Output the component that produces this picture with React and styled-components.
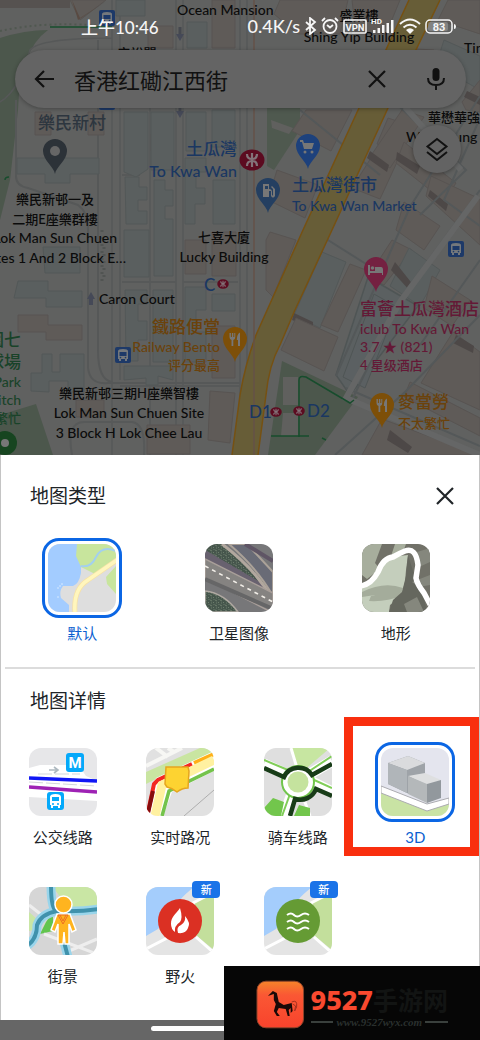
import React from "react";
import styled, { createGlobalStyle } from "styled-components";

const sans = 'Lato, "Noto Sans CJK SC", sans-serif';

const GlobalStyle = createGlobalStyle`
  * { box-sizing: border-box; }
  body { margin: 0; background: #fff; font-family: ${sans}; color: #202428; overflow-x: hidden; }
  button, input { font: inherit; color: inherit; }
`;

const Page = styled.main`
  position: relative;
  width: 100%;
`;

/* ---------- map ---------- */
const MapArea = styled.section`
  position: relative;
  overflow: hidden;
  background: #616160;
`;
const MapDrawing = styled.svg`
  display: block;
  width: 100%;
  height: auto;
`;
const Place = styled.div`
  position: absolute;
  left: ${(p) => p.$x}px;
  top: ${(p) => p.$y}px;
  transform: translateX(${(p) => (p.$align === "right" ? "-100%" : p.$align === "center" ? "-50%" : "0")});
  text-align: ${(p) => p.$align || "left"};
  white-space: nowrap;
  font-family: ${(p) => (p.$hk ? 'Lato, "Noto Sans CJK TC", sans-serif' : sans)};
  font-size: 13px;
  font-weight: 500;
  line-height: ${(p) => p.$line || 20}px;
  color: ${(p) => p.$color || "#0b0b0b"};
`;
const PlaceName = styled.div`
  font-size: 17px;
  line-height: 22px;
`;
const Latin = styled.div`
  font-size: ${(p) => p.$size || 14}px;
`;
const Chrome = styled.div`
  position: absolute;
  inset: 0 0 auto 0;
`;
const StatusBar = styled.div`
  display: flex;
  align-items: center;
  justify-content: space-between;
  height: 50px;
  padding: 2px 23px 0 81px;
  color: #f6f6f6;
  font-size: 17px;
  font-weight: 500;
`;
const StatusIcons = styled.div`
  display: flex;
  align-items: center;
  gap: 4px;
  font-size: 18px;
`;
const SearchBar = styled.form`
  display: flex;
  align-items: center;
  height: 58px;
  margin: 0 14px 0 15px;
  padding: 0 14px 0 13px;
  border-radius: 29px;
  background: #646464;
  box-shadow: 0 1px 4px rgba(0, 0, 0, 0.3);
`;
const SearchInput = styled.input`
  flex: 1;
  min-width: 0;
  margin-left: 14px;
  padding: 0;
  border: 0;
  outline: 0;
  background: transparent;
  font-size: 22px;
  color: #111;
`;
const IconButton = styled.button`
  display: grid;
  place-items: center;
  width: 32px;
  height: 32px;
  margin: 0 ${(p) => p.$after || 0}px 0 0;
  padding: 0;
  border: 0;
  background: none;
  color: ${(p) => p.$color || "#111"};
`;
const LayersButton = styled.button`
  display: grid;
  place-items: center;
  width: 48px;
  height: 48px;
  margin: 17px 19px 0 auto;
  padding: 0;
  border: 0;
  border-radius: 50%;
  background: #636363;
  box-shadow: 0 1px 4px rgba(0, 0, 0, 0.35);
  color: #121212;
`;

/* ---------- sheet ---------- */
const Sheet = styled.section`
  padding: 27px 4px 33px;
  background: #fff;
  border: solid #c4c4c4;
  border-width: 0 1px;
`;
const SheetHeader = styled.header`
  display: flex;
  align-items: center;
  justify-content: space-between;
  height: 28px;
  margin-bottom: ${(p) => p.$after}px;
  padding: 0 14px 0 25px;
`;
const Title = styled.h2`
  margin: 0;
  font-size: 19px;
  font-weight: 400;
  line-height: 28px;
`;
const Options = styled.div`
  display: grid;
  grid-template-columns: repeat(${(p) => p.$columns}, 1fr);
  row-gap: 33px;
  margin: 0 1px 0 -1px;
`;
const Divider = styled.hr`
  height: 2px;
  margin: 23px 0 18px;
  border: 0;
  background: #dcdcdc;
`;
const Option = styled.button`
  position: relative;
  display: flex;
  flex-direction: column;
  align-items: center;
  gap: 4px;
  padding: 0;
  border: 0;
  background: none;
  font-size: 15px;
  line-height: 22px;
  color: ${(p) => (p["aria-pressed"] ? "#0b5fd0" : "#202428")};
`;
const Frame = styled.span`
  position: relative;
  width: 80px;
  height: 80px;
  padding: 3px;
  border: 3px solid ${(p) => (p.$on ? "#0b66e4" : "transparent")};
  border-radius: 17px;
`;
const Tile = styled.svg`
  display: block;
  width: 68px;
  height: 68px;
  border-radius: 12px;
`;
const Badge = styled.span`
  position: absolute;
  top: -3px;
  right: -3px;
  width: 28px;
  border-radius: 4px;
  background: #1a73e8;
  color: #fff;
  font-size: 11px;
  font-weight: 500;
  line-height: 17px;
  text-align: center;
`;
const Highlight = styled.span`
  position: absolute;
  inset: -25px -5px -8px -13px;
  border: 9px solid #f92f0e;
`;
const NavBar = styled.footer`
  height: 20px;
  padding-top: 6px;
  background: #666;
`;
const Handle = styled.div`
  width: 37%;
  height: 5px;
  margin: 0 auto;
  border-radius: 3px;
  background: #fff;
`;

/* ---------- site mark ---------- */
const SiteMark = styled.aside`
  position: absolute;
  right: 0;
  bottom: 0;
  display: flex;
  gap: 6px;
  width: 256px;
  height: 74px;
  padding: 14px 32px 0 32px;
  background: #060606;
`;
const SiteText = styled.div`
  flex: 1;
  white-space: nowrap;
`;
const SiteName = styled.div`
  display: flex;
  align-items: center;
  height: 38px;
  font-size: 25px;
  font-weight: 700;
  color: #121413;
`;
const SiteNumber = styled.span`
  font-family: "Noto Sans", sans-serif;
  font-size: 27px;
  font-weight: 800;
  color: #f9492f;
`;
const SiteUrl = styled.div`
  display: flex;
  align-items: center;
  gap: 3px;
  height: 8px;
  font: italic 700 11px "Liberation Serif", serif;
  color: #2a302e;
  &::before, &::after { content: ""; flex: 1; height: 2px; background: #3a403d; }
`;

/* ---------- map symbols ---------- */
const Pin = ({ x, y, color, children }) => (
  <g transform={`translate(${x} ${y})`}>
    <path d="M0 35C-1 28-12 21-12 12a12 12 0 0 1 24 0C12 21 1 28 0 35Z" fill={color} />
    <g fill="#777" stroke="none">{children}</g>
  </g>
);
const Fork = () => (
  <path d="M-5.500 6v4q0 2.500 2 3v6h1.800v-6q2-.5 2-3V6h-1v4h-1V6h-1.400v4h-1V6ZM5 5.500Q1.800 7 1.800 13H3v6h2Z" />
);
const Bus = ({ x, y }) => (
  <g transform={`translate(${x} ${y})`}>
    <rect x="-8" y="-8" width="16" height="16" rx="2" fill="#1d3968" />
    <path d="M-5-4q0-2 5-2t5 2v8h-1v2h-2V4h-4v2h-2V4h-1Z" fill="#74787c" />
    <path d="M-3.500-3h7v4h-7Z" fill="#1d3968" />
    <circle cx="-2.500" cy="2.600" r=".8" fill="#1d3968" />
    <circle cx="2.500" cy="2.600" r=".8" fill="#1d3968" />
  </g>
);
const Metro = ({ x, y, s = 1 }) => (
  <g transform={`translate(${x} ${y}) scale(${s})`}>
    <ellipse rx="12.500" ry="10.500" fill="#5c0b20" />
    <path d="M0-7V7M-5-6Q-5-1 0-1T5-6M-5 6Q-5 1 0 1T5 6" fill="none" stroke="#837379" strokeWidth="2.200" />
  </g>
);
/* a building footprint with its shaded wall */
const Block = ({ p, wall, blue }) => (
  <g>
    <polygon points={p} fill={blue ? "#5a5f5f" : "#5f5b58"} stroke={blue ? "#535858" : "#585452"} strokeWidth="1" />
    {wall && <polygon points={wall} fill="#4d4847" />}
  </g>
);

const eastBlocks = [
  ["306,110 352,110 331,151 292,131"],
  ["277,170 318,185 305,218 268,200"],
  ["270,232 296,240 273,297 266,290 266,240"],
  ["322,252 346,262 320,328 294,315", "294,313 313,322 313,328 292,320"],
  ["350,264 366,270 338,332 321,325"],
  ["296,318 338,337 324,371 281,350"],
  ["388,118 412,126 398,153 377,144"],
  ["376,150 398,160 380,199 352,188"],
  ["398,48 434,50 421,78 392,66"],
  ["448,0 480,0 480,34 438,20"],
  ["444,40 480,56 480,90 436,65"],
  ["462,102 480,80 480,112 466,110", "467,91 480,97 480,105 464,97"],
  ["402,110 424,117 390,168 370,157", "370,151 389,165 387,172 367,158"],
  ["404,142 456,183 444,201 396,163", "397,152 420,166 417,174 396,160"],
  ["431,176 480,199 480,245 426,196", "430,190 448,204 446,211 428,196"],
  ["404,202 440,226 424,250 396,230"],
  ["392,240 412,250 384,285 368,277"],
  ["409,248 440,270 420,306 390,286", "395,262 414,286 410,291 391,270"],
  ["432,276 470,300 452,326 424,308"],
  ["453,332 480,352 480,410 421,383", "456,335 474,346 473,353 453,343"],
  ["410,382 480,418 480,436 404,397"],
  ["382,419 480,455 362,455", "390,430 412,447 408,453 387,440"],
  ["280,0 348,0 340,34 298,34 274,14"],
  ["352,0 400,0 386,34 356,34"],
];
const westBlocks = [
  ["17,158 99,158 99,174 70,174 70,183 45,183 45,174 17,174"],
  ["18,281 48,281 48,291 82,291 82,307 46,307 46,298 14,298"],
  ["43,247 80,247 80,273 45,273"],
  ["31,391 31,373 42,373 42,354 52,354 52,372 60,372 60,354 84,354 84,392 68,392 68,381 49,381 49,392"],
  ["124,112 148,112 148,169 136,177 124,172"],
  ["151,112 174,112 174,170 151,170"],
  ["125,177 139,177 139,187 147,187 147,200 138,200 138,211 147,211 147,224 126,224"],
  ["154,180 165,180 165,190 173,190 173,206 165,206 165,219 173,219 173,276 154,276"],
  ["186,112 206,112 206,151 186,151"],
  ["212,110 235,110 235,147 212,147"],
  ["185,158 206,158 206,172 196,172 196,188 205,188 205,204 195,204 195,224 185,224"],
  ["213,180 235,180 235,224 213,224"],
  ["124,230 149,230 149,277 124,277"],
  ["125,290 147,290 147,304 138,304 138,321 147,321 147,340 138,340 138,361 126,361"],
  ["153,290 173,290 173,362 153,362"],
  ["185,287 206,287 206,310 196,310 196,332 206,332 206,362 185,362"],
  ["212,294 235,294 235,311 212,311"],
  ["124,366 173,366 173,380 158,376 158,385 146,385 146,378 124,380"],
  ["187,22 207,22 207,48 187,48"],
  ["116,0 145,0 145,16 116,16"],
];
const warmBlocks = [
  ["35,112 51,112 51,135 35,135"], ["88,112 104,112 104,135 88,135"],
  ["18,315 48,315 48,325 82,325 82,340 46,340 46,332 18,332"],
  ["76,400 104,400 104,417 76,417"], ["148,26 173,26 173,48 148,48"],
  ["212,0 235,0 235,48 212,48"], ["70,0 106,0 80,20"],
  ["151,134 171,134 171,151 151,151"], ["185,240 206,240 206,274 185,274"],
  ["212,232 236,232 236,276 212,276"], ["212,326 235,326 235,378 212,378"],
  ["210,391 235,393 230,443 208,440"], ["147,425 190,425 190,454 147,454"],
];

const MapPicture = () => (
  <MapDrawing viewBox="0 0 480 455" aria-hidden="true">
    <rect width="480" height="455" fill="#606160" />
    <path d="M0 38Q25 30 48 30Q20 50 18 110L10 180L0 220Z" fill="#4c574c" />
    <path d="M0 415 36 404 53 455H0Z" fill="#4c574c" />
    <path d="M267 108H300L300 130L274 170L267 166Z" fill="#4f594f" />
    <path d="M282 361 358 397 315 455H268Z" fill="#4c574c" />
    <path d="M271 120 293 128 289 134 272 128Z" fill="#60605e" />
    <path d="M283 377H298V405H283ZM283 413H298V436H281Z" fill="#60605e" />
    <path d="M0 8H70V0H0Z" fill="#565250" />
    <path d="M112 0V455M120 0V380M176 0V108V455M183 0V455M150 108V455M240 0V455M247 0V455M0 102Q20 90 30 50Q40 38 112 38" fill="none" stroke="#565858" strokeWidth="1.500" />
    <path d="M16 100V176Q16 186 28 188L78 205Q88 212 88 230V368Q90 385 108 383H240M98 40V350Q98 380 112 382" fill="none" stroke="#565858" strokeWidth="2" />
    <path d="M72 455Q66 422 84 422H132Q146 424 144 455M122 282H176M183 282H238M122 175H140M120 386H240" fill="none" stroke="#575959" strokeWidth="2" />
    <path d="M102 230V282M104 240V280" stroke="#515452" strokeWidth="3" strokeDasharray="2 5" />
    <path d="M0 31Q50 20 112 27" fill="none" stroke="#505850" strokeWidth="2" strokeDasharray="2 3" />
    {warmBlocks.map(([p]) => <Block key={p} p={p} />)}
    {westBlocks.map(([p]) => <Block key={p} p={p} blue />)}
    {eastBlocks.map(([p, wall], i) => <Block key={p} p={p} wall={wall} blue={i % 7 === 3} />)}
    <path d="M368 277 418 306 350 395 336 375Z" fill="#5b6061" stroke="#4f5555" strokeWidth="1.500" />
    <path d="M374 294 397 307 365 388 343 377Z" fill="#5b6062" stroke="#4f5555" />
    <path d="M400 107 466 170 420 215M300 110 380 175M480 190 402 296 352 400M480 96 410 207 336 376M480 315 405 392 335 455M346 388 480 446M320 235 366 264M480 118 444 200 480 226M480 260 420 345" fill="none" stroke="#545859" strokeWidth="2" />
    <path d="M405 107 461 170M478 196 400 302 346 398 480 455" fill="none" stroke="#656666" strokeWidth="6" />
    <path d="M78 20 105 2 80 18 72 0Z" fill="#594a42" />
    <path d="M409 0 359 108 303 230 256 335Q245 365 240 395L232 455H258L266 395Q269 365 280 345L295 310 332 230 388 108 440 0Z" fill="#675d37" />
    <path d="M409 0 359 108 303 230 256 335Q245 365 240 395L232 455M258 455 266 395Q269 365 280 345L295 310 332 230 388 108 440 0" fill="none" stroke="#765112" strokeWidth="1.500" />
    <path d="M254 0V455" stroke="#655248" strokeWidth="1.500" />
    <path d="M50 27H112M5 180Q5 177 9 177M299 437V380Q299 375 306 377L350 403 354 400M271 436H309M322 438 326 440" fill="none" stroke="#174d2d" strokeWidth="1.500" />
    <path d="M180 27V36M180 108V112" stroke="#45484f" strokeWidth="3" />
    <path d="M176 34H184L180 41ZM176 111H184L180 118ZM91 292 95 299H93V305H89V299H87Z" fill="#454957" />
    <Bus x={107} y={18} /><Bus x={107} y={102} /><Bus x={123} y={355} /><Bus x={456} y={249} />
    <Metro x={252} y={160} /><Metro x={223} y={284} s={0.46} /><Metro x={276} y={412} s={0.46} /><Metro x={299} y={411} s={0.46} />
    <Pin x={55} y={139} color="#2c3238"><circle cy="12" r="5" fill="#666" /></Pin>
    <Pin x={308} y={134} color="#1d417c">
      <path d="M-8 6h3l1 3h10l-2 6h-8L-6 8h-2Z" /><circle cx="-3" cy="18" r="1.500" /><circle cx="4" cy="18" r="1.500" />
    </Pin>
    <Pin x={268} y={178} color="#243f61">
      <path d="M-5 6h6v5q3 0 3 3v3q1 1 1 0v-6l-2-2 1-1 3 3v7q-2 3-4 0v-5h-2v6h-6Z" /><path d="M-3 8h3v3h-3Z" fill="#243f61" />
    </Pin>
    <Pin x={235} y={327} color="#7d4f08"><Fork /></Pin>
    <Pin x={382} y={393} color="#7d4f08"><Fork /></Pin>
    <Pin x={376} y={257} color="#742141">
      <path d="M-8 8h2v6h5v-4h6q2 0 2 3v5H6v-2H-6v2h-2Z" /><circle cx="-3.500" cy="11" r="1.800" />
    </Pin>
    <circle cx="5" cy="443" r="12" fill="#174520" /><circle cx="5" cy="443" r="4" fill="#777" />
  </MapDrawing>
);

const blue = "#1a3762";
const green = "#194329";
const orange = "#6b420b";
const pink = "#641936";

const MapLabels = () => (
  <>
    <Place $x={177} $y={0}><Latin>Ocean Mansion</Latin></Place>
    <Place $x={359} $y={5} $line={21} $align="center" $hk>盛業樓<Latin>Shing Yip Building</Latin></Place>
    <Place $x={137} $y={43} $align="center" $hk>安裕閣</Place>
    <Place $x={464} $y={38}><Latin>Tin</Latin></Place>
    <Place $x={428} $y={107} $hk>華懋華強</Place>
    <Place $x={406} $y={127}><Latin>Wah Keung</Latin></Place>
    <Place $x={72} $y={112} $align="center" $color="#2d363f" $hk><PlaceName>樂民新村</PlaceName></Place>
    <Place $x={55} $y={189} $align="center" $hk>樂民新邨一及<br />二期E座樂群樓</Place>
    <Place $x={117} $y={228} $align="right"><Latin>Lok Man Sun Chuen</Latin></Place>
    <Place $x={126} $y={248} $align="right"><Latin>Sites 1 And 2 Block E…</Latin></Place>
    <Place $x={237} $y={138} $align="right" $color={blue} $line={22} $hk><PlaceName>土瓜灣</PlaceName><Latin $size={16}>To Kwa Wan</Latin></Place>
    <Place $x={292} $y={174} $color={blue} $hk><PlaceName>土瓜灣街市</PlaceName><Latin>To Kwa Wan Market</Latin></Place>
    <Place $x={224} $y={227} $align="center" $hk>七喜大廈<Latin>Lucky Building</Latin></Place>
    <Place $x={204} $y={274} $color={blue}><PlaceName>C</PlaceName></Place>
    <Place $x={99} $y={289}><Latin>Caron Court</Latin></Place>
    <Place $x={220} $y={316} $align="right" $color={orange} $line={18} $hk><PlaceName>鐵路便當</PlaceName><Latin>Railway Bento</Latin>评分最高</Place>
    <Place $x={21} $y={329} $align="right" $color={green} $line={18} $hk><PlaceName>園七</PlaceName><PlaceName>球場</PlaceName><Latin>Park</Latin><Latin>Pitch</Latin>繁忙</Place>
    <Place $x={129} $y={383} $align="center" $hk>樂民新邨三期H座樂智樓<Latin>Lok Man Sun Chuen Site</Latin><Latin>3 Block H Lok Chee Lau</Latin></Place>
    <Place $x={249} $y={401} $color={blue}><PlaceName>D1</PlaceName></Place>
    <Place $x={307} $y={400} $color={blue}><PlaceName>D2</PlaceName></Place>
    <Place $x={360} $y={298} $color={pink} $line={18} $hk><PlaceName>富薈土瓜灣酒店</PlaceName><Latin>iclub To Kwa Wan</Latin><Latin>3.7 ★ (821)</Latin>4 星级酒店</Place>
    <Place $x={398} $y={391} $color={orange} $hk><PlaceName>麥當勞</PlaceName>不太繁忙</Place>
  </>
);

const Cross = ({ size = 18 }) => (
  <svg width={size} height={size} viewBox="0 0 18 18"><path d="m1 1 16 16M17 1 1 17" stroke="currentColor" strokeWidth="2.200" /></svg>
);

const StatusSymbols = () => (
  <>
    <svg width="13" height="18" viewBox="0 0 13 18" fill="none" stroke="currentColor" strokeWidth="1.800"><path d="m2 5 9 8-5 4V1l5 4-9 8" /></svg>
    <svg width="18" height="18" viewBox="0 0 18 18" fill="none" stroke="currentColor" strokeWidth="1.800"><circle cx="9" cy="9.500" r="6.500" /><path d="m1 4 3-3M17 4l-3-3M6 8l3 2.500 3-2.500" /></svg>
    <svg width="24" height="15" viewBox="0 0 24 15"><rect x="1" y="1" width="22" height="13" rx="1" fill="none" stroke="currentColor" strokeWidth="1.600" /><text x="12" y="11.500" textAnchor="middle" fontSize="9.500" fontWeight="700" fontFamily="Roboto, sans-serif" fill="currentColor">VPN</text></svg>
    <svg width="24" height="18" viewBox="0 0 24 18" fill="currentColor"><text x="0" y="7" fontSize="8" fontWeight="700" fontFamily="Roboto, sans-serif">HD</text><path d="M2 13h2.500v3H2ZM6.500 11H9v5H6.500ZM11 8h2.500v8H11ZM15.500 6H18v10h-2.500ZM20 3h2.500v13H20Z" /></svg>
    <svg width="22" height="17" viewBox="0 0 22 17" fill="none" stroke="currentColor" strokeWidth="2"><path d="M1 6Q11-3 21 6M4.500 9.500Q11 4 17.500 9.500" /><path d="M7 12q4-3.500 8 0l-4 4Z" fill="currentColor" stroke="none" /></svg>
    <svg width="32" height="15" viewBox="0 0 32 15"><rect x="1" y="1" width="26" height="13" rx="4" fill="none" stroke="currentColor" strokeWidth="1.500" /><rect x="3" y="3" width="20" height="9" rx="2" fill="#999" opacity=".6" /><path d="M29 5q2 0 2 2.500T29 10Z" fill="currentColor" /><text x="14" y="11.500" textAnchor="middle" fontSize="11" fontWeight="700" fontFamily="Roboto, sans-serif" fill="currentColor">83</text></svg>
  </>
);

/* ---------- tile drawings ---------- */
const DefaultArt = () => (
  <>
    <rect width="68" height="68" fill="#dedede" />
    <path d="M0 0H29L29 12 33 20 33 29Q31 40 25 42L15 42Q11 47 13 54L21 61V68H0Z" fill="#a3ccff" />
    <path d="M29 0H68V14L47 30 33 23 28 12ZM68 22 58 33 59 40 68 50Z" fill="#c8e59d" />
    <path d="M33 22Q43 24 48 13Q54 1 68 7" fill="none" stroke="#a3d0ee" strokeWidth="2" />
    <path d="M69 16 40 36Q25 45 27 69" fill="none" stroke="#f7e2a5" strokeWidth="5" /><path d="M69 16 40 36Q25 45 27 69" fill="none" stroke="#fff6bd" strokeWidth="3.500" />
    <path d="M13 40h2M9 44h2M9 53h2M12 41v2" stroke="#d5e9ff" />
  </>
);
const SatelliteArt = () => (
  <>
    <defs><pattern id="trees" width="5" height="5" patternUnits="userSpaceOnUse"><rect width="5" height="5" fill="#46564c" /><path d="m0 1 2 1M3 3l1 1M1 4h1M4 0v1" stroke="#6c7c6c" /></pattern></defs>
    <rect width="68" height="68" fill="#777779" />
    <path d="M2 0H16L68 45V49L0 6Z" fill="url(#trees)" />
    <path d="M0 6 50 35 68 47V59L0 20Z" fill="#68616f" />
    <path d="M24 0H42L68 28V52Q53 25 24 0Z" fill="#696b76" stroke="#aaa198" strokeWidth="2" />
    <path d="M17 0Q50 25 66 53" fill="none" stroke="#b1a79e" strokeWidth="3" />
    <path d="M40 0 68 17" stroke="#5f5565" strokeWidth="4" />
    <path d="M0 15 68 49V69L0 34Z" fill="#858381" stroke="#a89e99" strokeWidth="1.500" />
    <path d="M0 22 68 58" stroke="#f1ede7" strokeWidth="1.600" strokeDasharray="4 4" />
    <path d="M0 35 68 65" stroke="#666667" strokeWidth="4" />
    <path d="M0 47Q19 49 33 68H0Z" fill="url(#trees)" stroke="#b0a9a2" strokeWidth="1.500" />
  </>
);
const TerrainArt = () => (
  <>
    <rect width="68" height="68" fill="#717168" />
    <path d="M0 6 7 0H20L13 19 18 25 5 35 0 31ZM33 0H44L41 8 29 12Z" fill="#a7ae9d" />
    <path d="M0 42 12 35 27 13 46 11 44 26 43 38 39 53 28 61 27 68H0Z" fill="#c4cebc" />
    <path d="M0 48Q22 37 41 44L39 52Q25 58 7 57L9 52Q26 49 0 53Z" fill="#a4ac9b" />
    <path d="M46 11 51 27 61 50 65 68H27L31 56 40 48 44 32Z" fill="#65675e" />
    <path d="M55 8 68 4V18L57 23ZM50 38 68 31V41L57 43ZM42 60 55 53 62 68H45Z" fill="#85877d" />
    <path d="M-2 42Q9 41 16 28Q21 14 31 13Q38 9 43 7Q54 3 56 21L54 34Q55 40 62 49L70 64" fill="none" stroke="#fff" strokeWidth="5.500" />
  </>
);
const TransitArt = () => (
  <>
    <rect width="68" height="68" fill="#e7e7e9" />
    <path d="M0 20 11 17H42Q51 18 57 28L68 33V53L0 49Z" fill="#fff" />
    <path d="M0 30 68 33" stroke="#1017f5" strokeWidth="3.500" /><path d="M0 39 68 44" stroke="#9e22b4" strokeWidth="3.500" />
    <path d="m0 34 68 4M9 26h42" stroke="#d3d7da" strokeDasharray="14 3" />
    <path d="M20 22h8M25 19l4 3-4 3" fill="none" stroke="#aeb9c0" strokeWidth="1.600" />
    <rect x="37" y="5" width="18" height="19" rx="3" fill="#05a9fa" />
    <text x="46" y="20" textAnchor="middle" fontSize="15" fontWeight="700" fontFamily="Roboto, sans-serif" fill="#fff">M</text>
    <rect x="18" y="44" width="17" height="18" rx="3" fill="#05a9fa" />
    <path d="M21 49q0-3 5.500-3t5.500 3v8h-1v3h-2v-2h-5v2h-2v-3h-1Z" fill="#fff" /><path d="M23 49h7v4h-7Z" fill="#05a9fa" /><circle cx="24" cy="56" r="1" fill="#05a9fa" /><circle cx="29" cy="56" r="1" fill="#05a9fa" />
  </>
);
const TrafficArt = () => (
  <>
    <rect width="68" height="68" fill="#e1e1e1" />
    <path d="M0 24 54 0H68V7L14 29 0 36Z" fill="#c9e5a1" />
    <path d="M0 18 36 0M10 0 22 9M22 0 28 4" fill="none" stroke="#f7f7f4" strokeWidth="4" />
    <path d="M0 62 10 30 68 3V23L26 44 17 68H0Z" fill="#fff" />
    <path d="M2 64 8 36 12 32 46 16" fill="none" stroke="#f32722" strokeWidth="4" /><path d="M2 65 7 43" stroke="#860d0d" strokeWidth="4" /><path d="m48 15 20-9" stroke="#ffb018" strokeWidth="4" />
    <path d="M9 68 16 37 68 12" fill="none" stroke="#fff1a1" strokeWidth="9" />
    <path d="M16 68 23 43 68 21" fill="none" stroke="#74c34b" strokeWidth="3.500" />
    <path d="M38 68 68 42" stroke="#adadad" />
    <path d="M20 19h22l1 4-1 17Q36 40 31 44Q26 40 21 39L19 36Z" fill="#fdd331" stroke="#e5a51f" strokeWidth="1.500" />
  </>
);
const BikeArt = () => (
  <>
    <rect width="68" height="68" fill="#dfdfdf" /><path d="M27 0H66L38 24 31 17Z" fill="#c7e6a1" />
    <path d="M0 16 22 26M68 13 46 26M48 34 68 44M28 46 20 68" stroke="#fff" strokeWidth="11" />
    <path d="M27 0 33 20M38 46 46 68" stroke="#fff" strokeWidth="3" />
    <path d="M0 60 9 50 20 54 17 68H0ZM35 57 46 60V68H30Z" fill="#72c64c" />
    <path d="M0 12 24 22M44 24 68 8M48 31 68 40M26 46 18 68" fill="none" stroke="#80cd58" strokeWidth="2" />
    <circle cx="34" cy="34" r="16" fill="#fff" stroke="#71c54c" strokeWidth="2" />
    <path d="M0 20 20 29A16 16 0 0 1 48 27L68 16M68 48 52 41A17 17 0 0 1 31 51L26 68" fill="none" stroke="#183c18" strokeWidth="4.500" />
    <circle cx="34" cy="34" r="10.500" fill="#c5e39e" />
  </>
);
const BuildingsArt = () => (
  <>
    <rect width="68" height="68" fill="#e4e5ee" /><path d="M0 45 46 60 68 54V68H0Z" fill="#c9e3a4" />
    <path d="M0 38 46 56 68 50V56L46 63 0 45Z" fill="#fff" stroke="#ababb0" />
    <path d="M7 15 27 8 44 15V30L28 46 7 36Z" fill="#9ea3a8" /><path d="M7 15 27 8 44 15 26 22Z" fill="#dadbdd" /><path d="M7 15 26 22V45L7 36Z" fill="#b0b5b9" />
    <path d="m27 28 17-3 16 7-14 5Z" fill="#dedfe0" /><path d="m27 28 19 8v19l-19-9Z" fill="#b4b8ba" /><path d="m46 36 14-4v18l-14 5Z" fill="#92989d" />
  </>
);
const StreetArt = () => (
  <>
    <rect width="68" height="68" fill="#d6d6d6" /><path d="M24 0H68V27L39 21ZM0 25 9 33 4 43 0 44Z" fill="#c9e6a4" /><path d="M17 35 24 25V44L11 47Z" fill="#62c54e" />
    <path d="M0 18 14 29M15 47 68 67M40 64 68 52" stroke="#eee" strokeWidth="3" />
    <path d="M22-2Q22 21 27 24Q52 25 70 22M28 24Q12 27 8 38Q8 52-2 59M35 55 39 70" fill="none" stroke="#99d5eb" strokeWidth="9" />
    <path d="M22-2Q22 21 27 24Q52 25 70 22M28 24Q12 27 8 38Q8 52-2 59M35 55 39 70" fill="none" stroke="#4092ac" strokeWidth="4" />
    <g fill="#ffb41f" stroke="#fff" strokeWidth="1.500"><path d="M28 27h13l6 16-4 2-3-8v20h-4l-1-12-1 12h-5V37l-3 8-4-2Z" /><circle cx="34.500" cy="17.500" r="8.500" /></g>
    <path d="m29 28 5 9 5-9M31 28l3 6 3-6M29 28h10" fill="none" stroke="#ed6d23" />
  </>
);
const AlertBase = ({ color, children }) => (
  <>
    <rect width="68" height="68" fill="#e4e4e4" /><path d="M0 0H48Q38 8 35 12L12 42 0 49Z" fill="#a4cdfc" /><path d="M49 14 68 9V63L46 45Z" fill="#c3df9c" />
    <path d="M0 62 25 49M50 50 68 66M45 17 68 5" fill="none" stroke="#fff" strokeWidth="3" />
    <circle cx="34" cy="34" r="22" fill={color} />{children}
  </>
);
const FireArt = () => (
  <AlertBase color="#db3023"><path d="M34 21C29 28 25 30 25 37Q25 42 29 45Q28 39 34 35Q37 31 34 21ZM39 29Q40 35 35 38Q30 40 32 46Q40 47 42 41Q45 36 39 29Z" fill="#fff" /></AlertBase>
);
const AirArt = () => (
  <AlertBase color="#659b34"><path d="M23 28q4-3 7 0t7 0 8 0M23 35q4-3 7 0t7 0 8 0M23 42q4-3 7 0t7 0 8 0" fill="none" stroke="#fff" strokeWidth="2" /></AlertBase>
);

const mapTypes = [
  { label: "默认", Art: DefaultArt, on: true },
  { label: "卫星图像", Art: SatelliteArt },
  { label: "地形", Art: TerrainArt },
];
const mapDetails = [
  { label: "公交线路", Art: TransitArt },
  { label: "实时路况", Art: TrafficArt },
  { label: "骑车线路", Art: BikeArt },
  { label: "3D", Art: BuildingsArt, on: true, marked: true },
  { label: "街景", Art: StreetArt },
  { label: "野火", Art: FireArt, fresh: true },
  { label: "", name: "空气质量", Art: AirArt, fresh: true },
];

const MapOption = ({ label, name, Art, on, fresh, marked }) => (
  <Option type="button" aria-pressed={!!on} aria-label={name}>
    {marked && <Highlight />}
    <Frame $on={on}>
      <Tile viewBox="0 0 68 68" aria-hidden="true"><Art /></Tile>
      {fresh && <Badge>新</Badge>}
    </Frame>
    {label}
  </Option>
);

export default function App() {
  return (
    <Page>
      <GlobalStyle />
      <MapArea>
        <MapPicture />
        <MapLabels />
        <Chrome>
          <StatusBar>
            <span>上午10:46</span>
            <StatusIcons>0.4K/s<StatusSymbols /></StatusIcons>
          </StatusBar>
          <SearchBar onSubmit={(e) => e.preventDefault()}>
            <IconButton type="button" aria-label="返回">
              <svg width="20" height="18" viewBox="0 0 20 18" fill="none" stroke="currentColor" strokeWidth="2.200"><path d="M20 9H2M10 1 2 9l8 8" /></svg>
            </IconButton>
            <SearchInput aria-label="搜索" defaultValue="香港红磡江西街" />
            <IconButton type="button" aria-label="清除" $after={27}><Cross /></IconButton>
            <IconButton type="button" aria-label="语音搜索">
              <svg width="18" height="24" viewBox="0 0 18 24"><rect x="5.500" y="1" width="7" height="13" rx="3.500" fill="currentColor" /><path d="M1 11q0 7 8 7t8-7M9 18v5" fill="none" stroke="currentColor" strokeWidth="2" /></svg>
            </IconButton>
          </SearchBar>
          <LayersButton type="button" aria-label="图层">
            <svg width="24" height="24" viewBox="0 0 24 24" fill="none" stroke="currentColor" strokeWidth="2"><path d="m12 2 9.500 7.500L12 17 2.500 9.500ZM2 15l10 8 10-8" /></svg>
          </LayersButton>
        </Chrome>
      </MapArea>
      <Sheet>
        <SheetHeader $after={28}>
          <Title>地图类型</Title>
          <IconButton type="button" aria-label="关闭" $color="#202428"><Cross /></IconButton>
        </SheetHeader>
        <Options $columns={3}>{mapTypes.map((o) => <MapOption key={o.label} {...o} />)}</Options>
        <Divider />
        <SheetHeader $after={27}><Title>地图详情</Title></SheetHeader>
        <Options $columns={4}>{mapDetails.map((o) => <MapOption key={o.name || o.label} {...o} />)}</Options>
      </Sheet>
      <NavBar><Handle /></NavBar>
      <SiteMark>
        <svg width="49" height="49" viewBox="0 0 49 49" aria-hidden="true">
          <defs><linearGradient id="ember" x2="0" y2="1"><stop stopColor="#f5842a" /><stop offset=".3" stopColor="#fa5734" /><stop offset="1" stopColor="#f8432c" /></linearGradient></defs>
          <rect x="1" y="1" width="47" height="47" rx="9" fill="url(#ember)" stroke="#8f442b" />
          <path d="m12 16 5-5 4 2 2 9 5 3 8-2 1 8-2 2v-5l-2 2 1 6h-2l-2-7-7-1-2 4 3 4h-3l-3-5 2-7-2-4v-6l-3 1Z" fill="#190907" />
          <path d="M36 22q6-3 5 5l-2 4 1-5-3-2" fill="none" stroke="#a3301e" />
        </svg>
        <SiteText>
          <SiteName><SiteNumber>9527</SiteNumber>手游网</SiteName>
          <SiteUrl>www.9527wyx.com</SiteUrl>
        </SiteText>
      </SiteMark>
    </Page>
  );
}
